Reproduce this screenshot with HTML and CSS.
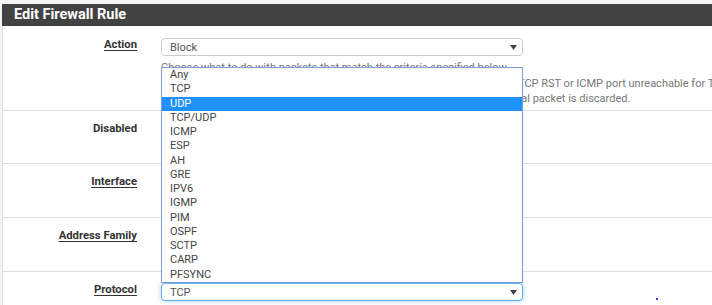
FILE: index.html
```html
<!DOCTYPE html>
<html lang="en">

<head>
    <meta charset="UTF-8">
    <meta name="viewport" content="width=device-width, initial-scale=1.0">
    <title>Edit Firewall Rule</title>
    <link rel="stylesheet" href="styles.css">
</head>

<body>

    <div class="panel">
        <div class="panel-heading">
            <h2 class="panel-title">Edit Firewall Rule</h2>
        </div>
        <div class="panel-body">
            <div class="form-group">
                <label class="control-label"><span class="required">Action</span></label>
                <div class="field">
                    <div class="select">
                        <span>Block</span>
                        <svg class="caret" width="7" height="5" viewBox="0 0 7 5"><path d="M0 0h7L3.5 5z"/></svg>
                    </div>
                    <p class="help-block">Choose what to do with packets that match the criteria specified below.<br>
                        Hint: the difference between block and reject is that with reject, a packet (TCP RST or ICMP port unreachable for TCP and UDP) is returned to the sender,<br>
                        whereas with block the packet is dropped silently. In either case, the original packet is discarded.</p>
                </div>
            </div>

            <div class="form-group">
                <label class="control-label">Disabled</label>
                <div class="field">
                    <label class="checkbox"><input type="checkbox"> Disable this rule</label>
                </div>
            </div>

            <div class="form-group">
                <label class="control-label"><span class="required">Interface</span></label>
                <div class="field">
                    <div class="select">
                        <span>WAN</span>
                        <svg class="caret" width="7" height="5" viewBox="0 0 7 5"><path d="M0 0h7L3.5 5z"/></svg>
                    </div>
                </div>
            </div>

            <div class="form-group">
                <label class="control-label"><span class="required">Address Family</span></label>
                <div class="field">
                    <div class="select">
                        <span>IPv4</span>
                        <svg class="caret" width="7" height="5" viewBox="0 0 7 5"><path d="M0 0h7L3.5 5z"/></svg>
                    </div>
                </div>
            </div>

            <div class="form-group">
                <label class="control-label"><span class="required">Protocol</span></label>
                <div class="field">
                    <div class="select focus">
                        <span>TCP</span>
                        <svg class="caret" width="7" height="5" viewBox="0 0 7 5"><path d="M0 0h7L3.5 5z"/></svg>
                    </div>
                </div>
            </div>
        </div>
    </div>

    <!-- open option list of the Protocol select -->
    <ul class="dropdown">
        <li>Any</li>
        <li>TCP</li>
        <li class="selected">UDP</li>
        <li>TCP/UDP</li>
        <li>ICMP</li>
        <li>ESP</li>
        <li>AH</li>
        <li>GRE</li>
        <li>IPV6</li>
        <li>IGMP</li>
        <li>PIM</li>
        <li>OSPF</li>
        <li>SCTP</li>
        <li>CARP</li>
        <li>PFSYNC</li>
    </ul>

    <span class="pointer-dot"></span>

</body>

</html>
```

FILE: styles.css
```css
/* Basic Reset */
* {
    box-sizing: border-box;
    margin: 0;
    padding: 0;
}

body {
    background-color: #f4f4f4;
    font-family: Roboto, "Liberation Sans", Arial, sans-serif;
    color: #333;
    padding: 4px 0 0 2px;
    overflow: hidden;
}

.panel-heading {
    background-color: #424242;
    height: 22px;
    padding-left: 12px;
}

.panel-title {
    color: #fff;
    font-size: 14.5px;
    font-weight: 700;
    line-height: 22px;
}

.panel-body {
    background-color: #fff;
    border-left: 1px solid #ddd;
    padding-top: 1px;
    height: 300px;
}

.form-group {
    display: grid;
    grid-template-columns: 146px 1fr;
    border-top: 1px solid #ddd;
    height: 54px;
}

.form-group:first-child {
    border-top: none;
    height: 83px;
}

.form-group:nth-child(2) {
    height: 53px;
}

.control-label {
    text-align: right;
    padding: 9px 12px 0 0;
    font-size: 11.3px;
    font-weight: 700;
    line-height: 18px;
    color: #333;
}

.required {
    text-decoration: underline;
    text-underline-offset: 2px;
}

.field {
    padding: 11px 0 0 12px;
}

.select {
    display: flex;
    align-items: center;
    justify-content: space-between;
    width: 362px;
    height: 18px;
    padding: 0 5px 0 8px;
    background-color: #fff;
    border: 1px solid #ccc;
    border-radius: 4px;
    font-size: 11px;
    color: #555;
}

.select.focus {
    border-color: #66afe9;
    box-shadow: 0 0 5px rgba(102, 175, 233, 0.6);
}

.caret {
    fill: #444;
}

.help-block {
    margin-top: 4px;
    font-size: 11px;
    line-height: 15.5px;
    color: #777;
    white-space: nowrap;
}

.checkbox {
    font-size: 11px;
    line-height: 18px;
}

.dropdown {
    position: absolute;
    left: 161px;
    top: 67px;
    width: 362px;
    height: 216px;
    list-style: none;
    background-color: #fff;
    border: 1px solid #7a9fd6;
    font-size: 11px;
    color: #444;
}

.dropdown li {
    height: 14.27px;
    line-height: 14.27px;
    padding-left: 8px;
}

.dropdown li.selected {
    background-color: #1e90ff;
    color: #fff;
}

.pointer-dot {
    position: absolute;
    left: 656px;
    top: 298px;
    width: 2px;
    height: 2px;
    background-color: #3040ff;
}
```
